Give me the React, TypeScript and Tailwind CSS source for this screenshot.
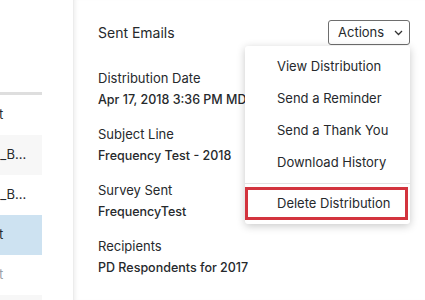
import React from 'react';

interface Field {
  label: string;
  value: string;
}

const fields: Field[] = [
  { label: 'Distribution Date', value: 'Apr 17, 2018 3:36 PM MDT' },
  { label: 'Subject Line', value: 'Frequency Test - 2018' },
  { label: 'Survey Sent', value: 'FrequencyTest' },
  { label: 'Recipients', value: 'PD Respondents for 2017' },
];

const actions = ['View Distribution', 'Send a Reminder', 'Send a Thank You', 'Download History'];

const App: React.FC = () => {
  return (
    <div
      className="w-[425px] h-[300px] flex overflow-hidden bg-white text-[#26292c]"
      style={{ fontFamily: 'Inter, "Liberation Sans", sans-serif' }}
    >
      {/* list column, cut off at the left edge */}
      <div className="w-[42px] shrink-0 pt-[92px] overflow-hidden text-[13px]">
        <div className="h-[3px] bg-[#dedede]" />
        <div className="h-[40px] flex items-center">
          <span className="whitespace-nowrap -ml-[1px]">t</span>
        </div>
        <div className="h-[40px] flex items-center bg-[#f7f7f7]">
          <span className="whitespace-nowrap -ml-[3px]"><span className="text-[#1a73c9]">l</span>_B...</span>
        </div>
        <div className="h-[40px] flex items-center">
          <span className="whitespace-nowrap -ml-[3px]">l_B...</span>
        </div>
        <div className="h-[40px] flex items-center bg-[#cde2f1]">
          <span className="whitespace-nowrap -ml-[1px]">t</span>
        </div>
        <div className="h-[40px] flex items-center">
          <span className="whitespace-nowrap -ml-[1px] text-[#9aa0a6]">t</span>
        </div>
        <div className="h-[40px] bg-[#f7f7f7]" />
      </div>

      <div className="w-[31px] shrink-0" />

      {/* detail panel */}
      <div className="relative flex-1 border-l border-[#ececec] shadow-[inset_4px_0_4px_-3px_rgba(0,0,0,0.08)] pl-[24px] pr-[15px] pt-[20px]">
        <div className="flex items-center justify-between h-[25px]">
          <span className="text-[14px]">Sent Emails</span>
          <button className="h-[25px] w-[82px] flex items-center gap-[10px] pl-[9px] border border-[#6e6e6e] rounded-[3px] text-[13px]">
            <span>Actions</span>
            <svg width="9" height="6" viewBox="0 0 9 6" fill="none" stroke="#333" strokeWidth="1.3">
              <polyline points="1,1 4.5,4.5 8,1" />
            </svg>
          </button>
        </div>

        <div className="mt-[22px] flex flex-col gap-[12px]">
          {fields.map((f) => (
            <div key={f.label} className="whitespace-nowrap">
              <div className="leading-[22px] text-[13px]">{f.label}</div>
              <div className="leading-[22px] text-[12.5px] font-medium">{f.value}</div>
            </div>
          ))}
        </div>

        {/* actions menu */}
        <div className="absolute left-[171px] top-[46px] w-[165px] bg-white rounded-[3px] shadow-[0_2px_8px_rgba(0,0,0,0.22)] pt-[5px] pb-[4px] text-[13px]">
          {actions.map((a) => (
            <div key={a} className="h-[32px] flex items-center pl-[32px]">
              {a}
            </div>
          ))}
          <div className="h-px bg-[#e3e3e3] mt-[4px] mb-[3px]" />
          <div className="h-[33px] mr-[2px] flex items-center pl-[29px] border-[3px] border-[#d3343e]">
            Delete Distribution
          </div>
        </div>
      </div>
    </div>
  );
};

export default App;
